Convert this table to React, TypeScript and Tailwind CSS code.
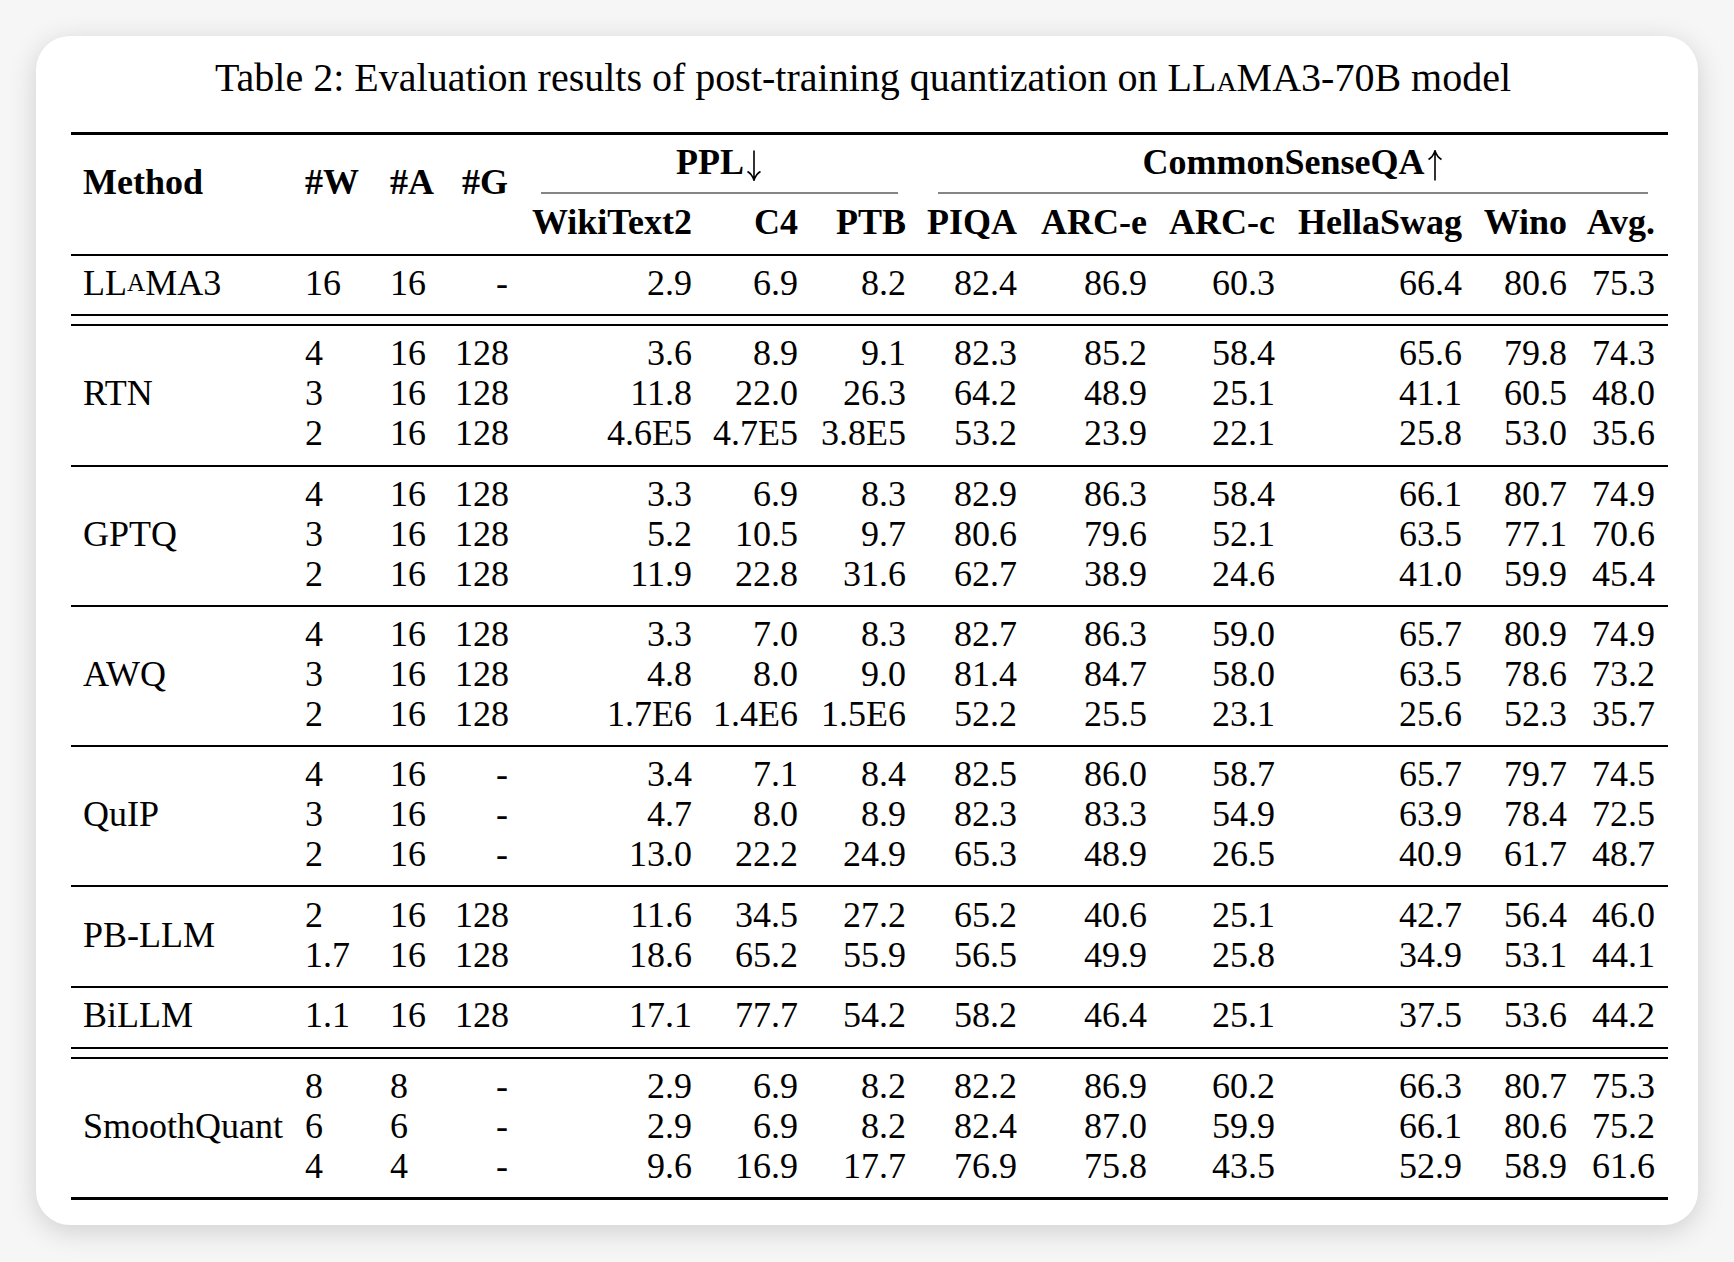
const cols =
  'grid grid-cols-[224px_85px_75px_63px_184px_106px_108px_111px_130px_128px_187px_105px_91px]';

type Row = string[];
type Group = { name: React.ReactNode; rows: Row[]; pad?: string };

const span: Record<number, string> = { 1: 'row-span-1', 2: 'row-span-2', 3: 'row-span-3' };

// fake small caps "a", kept out of the line box height
const Llama = () => (
  <>
    LL<span className="text-[0.7em] leading-none">A</span>MA3
  </>
);

const DownArrow = () => (
  <svg viewBox="0 0 18 31" className="ml-[1px] inline-block h-[31px] w-[18px] align-[-7px]">
    <path d="M9 0.5V30M2.5 21.5Q7 24 9 30.2Q11 24 15.5 21.5" fill="none" stroke="black" strokeWidth="1.6" />
  </svg>
);

const UpArrow = () => (
  <svg viewBox="0 0 18 31" className="ml-[1px] inline-block h-[31px] w-[18px] align-[-7px]">
    <path d="M9 30.5V1M2.5 9.5Q7 7 9 0.8Q11 7 15.5 9.5" fill="none" stroke="black" strokeWidth="1.6" />
  </svg>
);

const groups: Group[] = [
  { name: <Llama />, rows: [['16', '16', '-', '2.9', '6.9', '8.2', '82.4', '86.9', '60.3', '66.4', '80.6', '75.3']] },
  {
    name: 'RTN',
    pad: 'pt-[7px] pb-[12px]',
    rows: [
      ['4', '16', '128', '3.6', '8.9', '9.1', '82.3', '85.2', '58.4', '65.6', '79.8', '74.3'],
      ['3', '16', '128', '11.8', '22.0', '26.3', '64.2', '48.9', '25.1', '41.1', '60.5', '48.0'],
      ['2', '16', '128', '4.6E5', '4.7E5', '3.8E5', '53.2', '23.9', '22.1', '25.8', '53.0', '35.6'],
    ],
  },
  {
    name: 'GPTQ',
    rows: [
      ['4', '16', '128', '3.3', '6.9', '8.3', '82.9', '86.3', '58.4', '66.1', '80.7', '74.9'],
      ['3', '16', '128', '5.2', '10.5', '9.7', '80.6', '79.6', '52.1', '63.5', '77.1', '70.6'],
      ['2', '16', '128', '11.9', '22.8', '31.6', '62.7', '38.9', '24.6', '41.0', '59.9', '45.4'],
    ],
  },
  {
    name: 'AWQ',
    rows: [
      ['4', '16', '128', '3.3', '7.0', '8.3', '82.7', '86.3', '59.0', '65.7', '80.9', '74.9'],
      ['3', '16', '128', '4.8', '8.0', '9.0', '81.4', '84.7', '58.0', '63.5', '78.6', '73.2'],
      ['2', '16', '128', '1.7E6', '1.4E6', '1.5E6', '52.2', '25.5', '23.1', '25.6', '52.3', '35.7'],
    ],
  },
  {
    name: 'QuIP',
    rows: [
      ['4', '16', '-', '3.4', '7.1', '8.4', '82.5', '86.0', '58.7', '65.7', '79.7', '74.5'],
      ['3', '16', '-', '4.7', '8.0', '8.9', '82.3', '83.3', '54.9', '63.9', '78.4', '72.5'],
      ['2', '16', '-', '13.0', '22.2', '24.9', '65.3', '48.9', '26.5', '40.9', '61.7', '48.7'],
    ],
  },
  {
    name: 'PB-LLM',
    pad: 'pt-[8px] pb-[11px]',
    rows: [
      ['2', '16', '128', '11.6', '34.5', '27.2', '65.2', '40.6', '25.1', '42.7', '56.4', '46.0'],
      ['1.7', '16', '128', '18.6', '65.2', '55.9', '56.5', '49.9', '25.8', '34.9', '53.1', '44.1'],
    ],
  },
  {
    name: 'BiLLM',
    pad: 'pt-[7px] pb-[12px]',
    rows: [['1.1', '16', '128', '17.1', '77.7', '54.2', '58.2', '46.4', '25.1', '37.5', '53.6', '44.2']],
  },
  {
    name: 'SmoothQuant',
    rows: [
      ['8', '8', '-', '2.9', '6.9', '8.2', '82.2', '86.9', '60.2', '66.3', '80.7', '75.3'],
      ['6', '6', '-', '2.9', '6.9', '8.2', '82.4', '87.0', '59.9', '66.1', '80.6', '75.2'],
      ['4', '4', '-', '9.6', '16.9', '17.7', '76.9', '75.8', '43.5', '52.9', '58.9', '61.6'],
    ],
  },
];

// separator drawn after each group (index matches groups)
const after: ('single' | 'double' | 'none')[] = ['double', 'single', 'single', 'single', 'single', 'single', 'double', 'none'];

function cellClass(i: number) {
  if (i < 2) return 'pl-[10px] text-left';
  if (i === 11) return 'pr-[13px] text-right';
  return 'pr-[10px] text-right';
}

function GroupRows({ g }: { g: Group }) {
  return (
    <div className={`${cols} ${g.pad ?? 'pt-[7px] pb-[11px]'} leading-[40px]`}>
      <div className={`${span[g.rows.length]} pl-3 flex items-center whitespace-nowrap`}>{g.name}</div>
      {g.rows.map((r, ri) =>
        r.map((v, i) => (
          <div key={`${ri}-${i}`} className={`h-[40px] ${cellClass(i)}`}>
            {v}
          </div>
        )),
      )}
    </div>
  );
}

const subHeads = ['WikiText2', 'C4', 'PTB', 'PIQA', 'ARC-e', 'ARC-c', 'HellaSwag', 'Wino', 'Avg.'];

export default function App() {
  return (
    <div className="min-h-screen bg-[#f6f6f6] p-[36px] font-['Liberation_Serif',serif] text-black">
      <div className="rounded-[34px] bg-white pt-[22px] pb-[25px] pl-[35px] pr-[30px] shadow-[0_6px_28px_rgba(0,0,0,0.16)]">
        <h1 className="pr-[13px] text-center text-[40px] leading-[40px] whitespace-nowrap">
          Table 2: Evaluation results of post-training quantization on <Llama />-70B model
        </h1>

        <div className="mt-[34px] w-[1597px] text-[36px]">
          <div className="h-[3px] bg-black" />

          {/* header */}
          <div className={`${cols} font-bold leading-[40px]`}>
            <div className="row-span-2 pl-3 pt-[27px]">Method</div>
            <div className="row-span-2 pl-[10px] pt-[27px]">#W</div>
            <div className="row-span-2 pl-[10px] pt-[27px]">#A</div>
            <div className="row-span-2 pr-[10px] pt-[27px] text-right">#G</div>
            <div className="col-span-3 pt-[7px] pl-[23px] pr-[18px]">
              <div className="h-[40px] text-center whitespace-nowrap">
                PPL
                <DownArrow />
              </div>
              <div className="mt-[10px] h-[2px] bg-[#858585]" />
            </div>
            <div className="col-span-6 pt-[7px] pl-[22px] pr-[20px]">
              <div className="h-[40px] text-center whitespace-nowrap">
                CommonSenseQA
                <UpArrow />
              </div>
              <div className="mt-[10px] h-[2px] bg-[#858585]" />
            </div>
            {subHeads.map((h, i) => (
              <div key={h} className={`pt-[8px] pb-[12px] h-[60px] whitespace-nowrap ${cellClass(i + 3)}`}>
                {h}
              </div>
            ))}
          </div>

          <div className="h-[2px] bg-black" />

          {groups.map((g, gi) => (
            <div key={gi}>
              <GroupRows g={g} />
              {after[gi] === 'single' && <div className="h-[2px] bg-black" />}
              {after[gi] === 'double' && (
                <>
                  <div className="h-[2px] bg-black" />
                  <div className="mt-[8px] h-[2px] bg-black" />
                </>
              )}
            </div>
          ))}

          <div className="h-[3px] bg-black" />
        </div>
      </div>
    </div>
  );
}
